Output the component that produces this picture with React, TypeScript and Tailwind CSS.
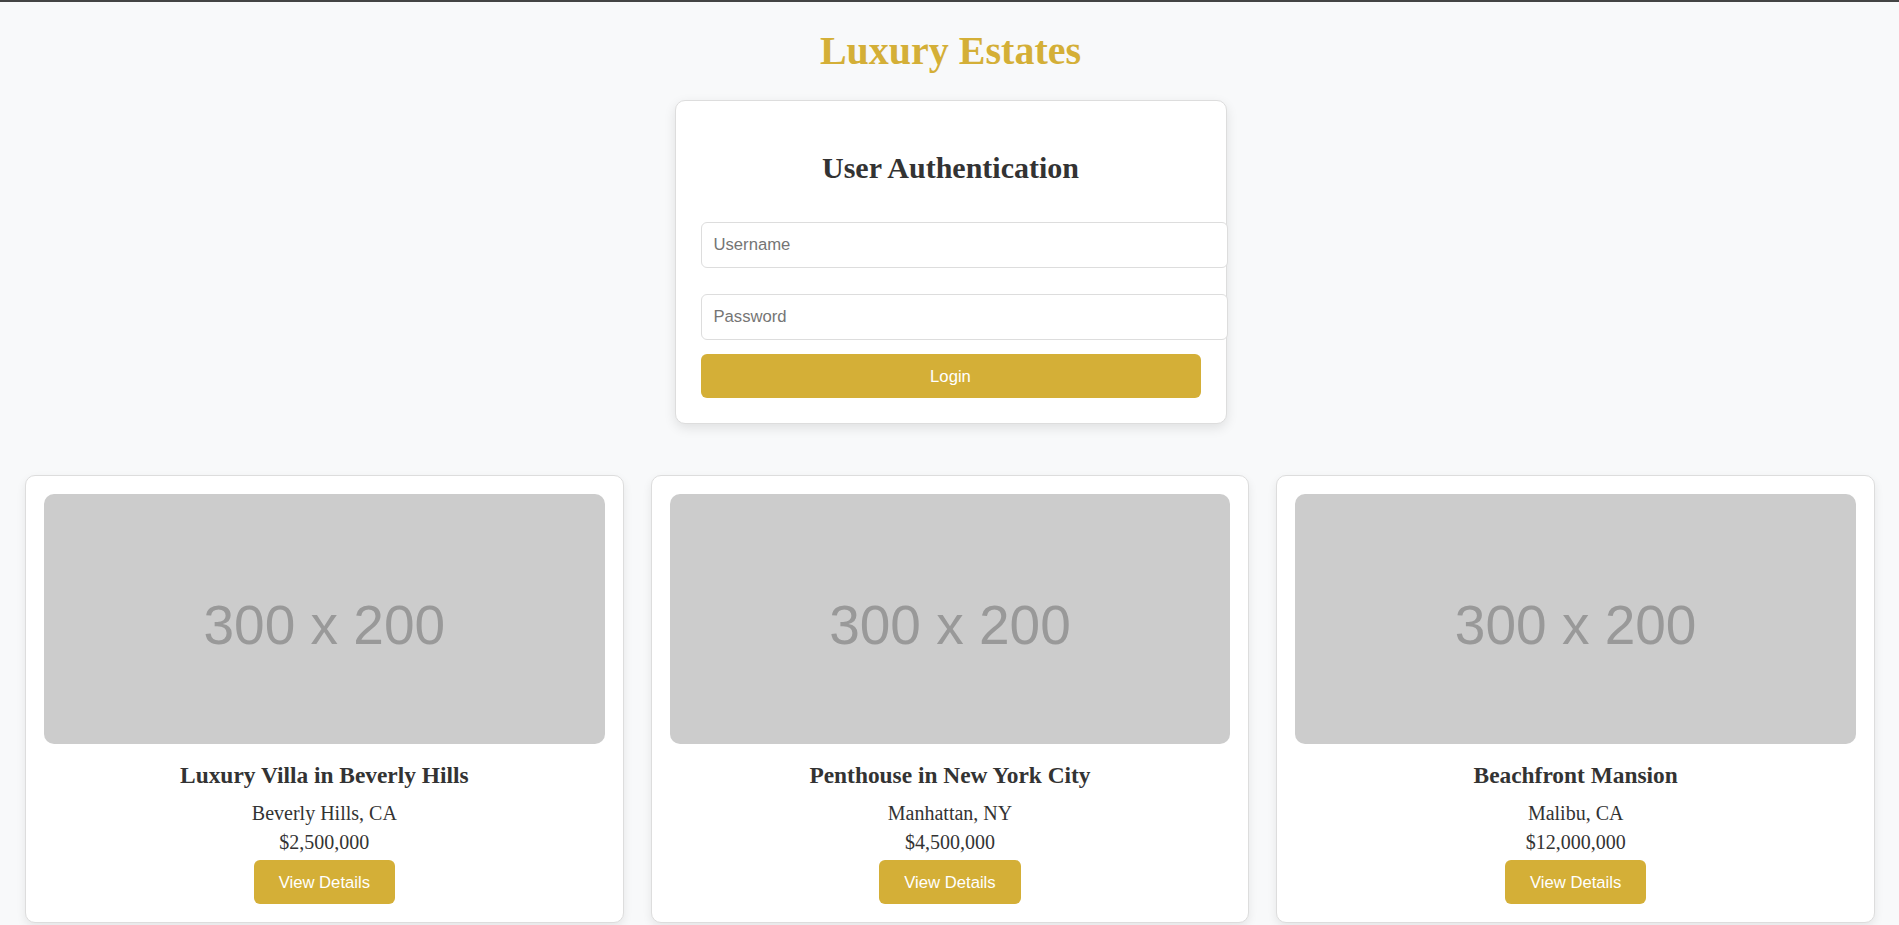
import React from "react";

const properties = [
  { title: "Luxury Villa in Beverly Hills", location: "Beverly Hills, CA", price: "$2,500,000" },
  { title: "Penthouse in New York City", location: "Manhattan, NY", price: "$4,500,000" },
  { title: "Beachfront Mansion", location: "Malibu, CA", price: "$12,000,000" },
];

export default function App() {
  return (
    <div className="min-h-screen bg-[#f8f9fa] font-['Liberation_Serif','Times_New_Roman',serif] text-[#333333]">
      <div className="h-[2px] bg-[#444444]" />
      <h1 className="mt-[26px] mb-[26px] pl-[2px] text-center text-[40px] leading-[46px] font-bold text-[#d4af37]">
        Luxury Estates
      </h1>

      <div className="relative left-[1px] mx-auto w-[552px] rounded-[10px] border border-[#dddddd] bg-white p-[25px] shadow-[0_4px_12px_rgba(0,0,0,0.1)]">
        <h2 className="mt-[24px] text-center text-[30px] leading-[35px] font-bold">User Authentication</h2>
        <input
          type="text"
          placeholder="Username"
          className="mt-[37px] block h-[46px] w-[527px] rounded-[6px] border border-[#dddddd] bg-white px-[12px] font-['Liberation_Sans',Arial,sans-serif] text-[16.67px] text-[#333333] outline-none placeholder:text-[#757575]"
        />
        <input
          type="password"
          placeholder="Password"
          className="mt-[26px] block h-[46px] w-[527px] rounded-[6px] border border-[#dddddd] bg-white px-[12px] font-['Liberation_Sans',Arial,sans-serif] text-[16.67px] text-[#333333] outline-none placeholder:text-[#757575]"
        />
        <button className="mt-[14px] block h-[44px] w-full rounded-[6px] bg-[#d4af37] font-['Liberation_Sans',Arial,sans-serif] text-[16.67px] text-white">
          Login
        </button>
      </div>

      <div className="mt-[51px] grid grid-cols-3 gap-[27px] pl-[25px] pr-[24px]">
        {properties.map((p) => (
          <div
            key={p.title}
            className="rounded-[10px] border border-[#dddddd] bg-white p-[18px] text-center shadow-[0_4px_10px_rgba(0,0,0,0.08)]"
          >
            <div className="flex h-[250px] items-center justify-center rounded-[10px] bg-[#cccccc] pt-[13px] font-['Liberation_Sans',Arial,sans-serif] text-[55px] leading-[55px] text-[#999999]">
              300 x 200
            </div>
            <h3 className="mt-[18px] text-[23.4px] leading-[27px] font-bold">{p.title}</h3>
            <p className="mt-[13px] text-[20px] leading-[23px]">{p.location}</p>
            <p className="mt-[6px] text-[20px] leading-[23px]">{p.price}</p>
            <button className="mt-[6px] h-[44px] rounded-[6px] bg-[#d4af37] px-[25px] font-['Liberation_Sans',Arial,sans-serif] text-[16.67px] text-white">
              View Details
            </button>
          </div>
        ))}
      </div>
    </div>
  );
}
